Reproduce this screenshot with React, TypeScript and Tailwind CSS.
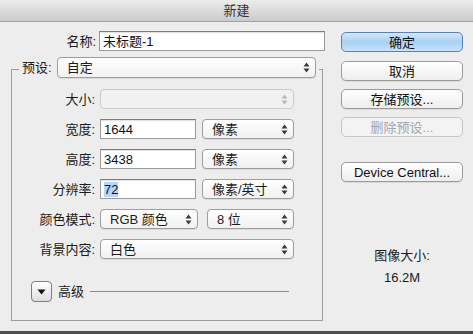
import React from 'react';

const FONT = "font-['Liberation_Sans','Noto_Sans_CJK_SC',sans-serif]";

function Arrows({ disabled = false }: { disabled?: boolean }) {
  const c = disabled ? '#b8b8b8' : '#3a3a3a';
  return (
    <svg width="7" height="11" viewBox="0 0 7 11" className="shrink-0">
      <path d="M3.5 0.5 L6.5 4.5 L0.5 4.5 Z" fill={c} />
      <path d="M0.5 6.5 L6.5 6.5 L3.5 10.5 Z" fill={c} />
    </svg>
  );
}

function Select({ value, w, h = 20, disabled = false }: { value?: string; w: number; h?: number; disabled?: boolean }) {
  return (
    <div
      style={{ width: w, height: h }}
      className={`flex items-center justify-between pl-[9px] pr-[5px] rounded-[4px] border ${
        disabled
          ? 'border-[#cbcbcb] bg-[#f1f1f1]'
          : 'border-[#9d9d9d] bg-gradient-to-b from-white to-[#f1f1f1] shadow-[0_1px_0_rgba(0,0,0,0.08)]'
      }`}
    >
      <span className="text-[13px] leading-none text-[#1b1b1b]">{value}</span>
      <Arrows disabled={disabled} />
    </div>
  );
}

function Field({ value, w, selected = false }: { value: string; w: number; selected?: boolean }) {
  return (
    <div
      style={{ width: w }}
      className="h-[20px] flex items-center pl-[3px] bg-white border border-[#9a9a9a] border-t-[#7c7c7c] shadow-[inset_0_1px_1px_rgba(0,0,0,0.12)]"
    >
      <span className={`text-[13px] leading-[15px] text-[#111] ${selected ? 'bg-[#b5d5fd]' : ''}`}>{value}</span>
    </div>
  );
}

function Row({ label, children }: { label: string; children: React.ReactNode }) {
  return (
    <div className="flex items-center h-[20px]">
      <div className="w-[84px] text-right text-[13px] leading-none text-[#1b1b1b] pr-[1px]">{label}</div>
      <div className="ml-[4px] flex items-center">{children}</div>
    </div>
  );
}

function Btn({ children, primary = false, disabled = false, className = '' }: { children: React.ReactNode; primary?: boolean; disabled?: boolean; className?: string }) {
  const look = primary
    ? 'border-[#5b80b2] bg-gradient-to-b from-[#d6e8fa] via-[#a8cff2] to-[#c8e3fb] text-[#111]'
    : disabled
    ? 'border-[#c6c6c6] bg-[#f3f3f3] text-[#a6a6a6]'
    : 'border-[#9b9b9b] bg-gradient-to-b from-white to-[#eeeeee] text-[#111] shadow-[0_1px_0_rgba(0,0,0,0.08)]';
  return (
    <div className={`w-[122px] h-[20px] rounded-[5px] border flex items-center justify-center text-[13px] leading-none ${look} ${className}`}>
      {children}
    </div>
  );
}

export default function App() {
  return (
    <div className={`w-[473px] h-[334px] bg-[#ededed] flex flex-col ${FONT}`}>
      {/* title bar */}
      <div className="h-[22px] shrink-0 bg-gradient-to-b from-[#ececec] to-[#cbcbcb] border-b border-[#a3a3a3] flex items-center justify-center">
        <span className="text-[13px] leading-none text-[#333]">新建</span>
      </div>

      <div className="flex h-[309px]">
        {/* left column */}
        <div className="w-[330px] pt-[9px]">
          <div className="flex items-center h-[20px]">
            <div className="w-[96px] text-right text-[13px] leading-none text-[#1b1b1b]">名称:</div>
            <div className="ml-[3px]">
              <Field value="未标题-1" w={226} />
            </div>
          </div>

          {/* preset group box */}
          <div className="relative mt-[18px] ml-[11px] w-[312px] h-[252px] border border-[#9c9c9c]">
            <div className="absolute top-[-13px] left-[7px] px-[3px] bg-[#ededed] flex items-center">
              <span className="text-[13px] leading-none text-[#1b1b1b]">预设:</span>
              <div className="ml-[5px]">
                <Select value="自定" w={259} h={21} />
              </div>
            </div>

            <div className="mt-[19px] flex flex-col gap-[10px]">
              <Row label="大小:">
                <Select w={194} disabled />
              </Row>
              <Row label="宽度:">
                <Field value="1644" w={96} />
                <div className="ml-[6px]"><Select value="像素" w={92} /></div>
              </Row>
              <Row label="高度:">
                <Field value="3438" w={96} />
                <div className="ml-[6px]"><Select value="像素" w={92} /></div>
              </Row>
              <Row label="分辨率:">
                <Field value="72" w={96} selected />
                <div className="ml-[6px]"><Select value="像素/英寸" w={92} /></div>
              </Row>
              <Row label="颜色模式:">
                <Select value="RGB 颜色" w={98} />
                <div className="ml-[9px]"><Select value="8 位" w={87} /></div>
              </Row>
              <Row label="背景内容:">
                <Select value="白色" w={194} />
              </Row>
            </div>

            <div className="mt-[22px] ml-[19px] flex items-center">
              <div className="w-[21px] h-[21px] rounded-[4px] border border-[#7d7d7d] bg-gradient-to-b from-white to-[#dedede] flex items-center justify-center">
                <svg width="9" height="6" viewBox="0 0 9 6">
                  <path d="M0.5 0.5 L8.5 0.5 L4.5 5.5 Z" fill="#111" />
                </svg>
              </div>
              <span className="ml-[6px] text-[13px] leading-none text-[#1b1b1b]">高级</span>
              <div className="ml-[6px] w-[199px] h-px bg-[#8c8c8c]" />
            </div>
          </div>
        </div>

        {/* right column */}
        <div className="pl-[11px] pt-[10px] flex flex-col">
          <Btn primary>确定</Btn>
          <Btn className="mt-[9px]">取消</Btn>
          <Btn className="mt-[8px]">存储预设...</Btn>
          <Btn className="mt-[8px]" disabled>删除预设...</Btn>
          <Btn className="mt-[25px]">Device Central...</Btn>
          <div className="w-[122px] mt-[66px] flex flex-col items-center">
            <span className="text-[13px] leading-[16px] text-[#1b1b1b]">图像大小:</span>
            <span className="mt-[6px] text-[13px] leading-[16px] text-[#1b1b1b]">16.2M</span>
          </div>
        </div>
      </div>

      {/* window bottom edge */}
      <div className="h-[3px] bg-[#505050]" />
    </div>
  );
}
